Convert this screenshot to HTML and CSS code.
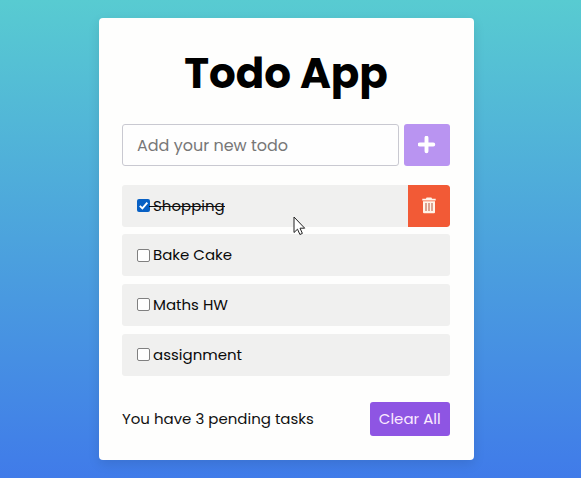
FILE: index.html
```html
<!DOCTYPE html>
<html lang="en">
<head>
<meta charset="utf-8">
<title>Todo App</title>
<link rel="stylesheet" href="styles.css">
</head>
<body>
<main class="card">
  <h1 class="title">Todo App</h1>
  <form class="entry">
    <input class="field" type="text" placeholder="Add your new todo" aria-label="New todo">
    <button class="add" type="button" aria-label="Add">
      <svg width="18" height="18" viewBox="0 0 18 18"><path d="M8.500 1.700v13.600M1.700 8.500h13.600" fill="none" stroke="#fff" stroke-width="3.900" stroke-linecap="round"/></svg>
    </button>
  </form>
  <ul class="list">
    <li class="item done"><span class="box"><svg width="13" height="13" viewBox="0 0 13 13"><path d="M2.8 6.8l2.6 2.6 4.9-5.8" fill="none" stroke="#fff" stroke-width="1.9"/></svg></span><span class="label">Shopping</span>
      <button class="remove" type="button" aria-label="Delete">
        <svg width="14" height="17" viewBox="0 0 14 17"><path d="M.3 1.7h3.6L4.6.6h4.8l.7 1.1h3.6v1.7H.3z" fill="#fff3e8"/><path d="M1 4.300h12v11q0 1-1 1H2q-1 0-1-1z" fill="#fff3e8"/><path d="M4 6v8M7 6v8M10 6v8" stroke="#b8553c" stroke-width="1"/></svg>
      </button>
    </li>
    <li class="item"><span class="box"></span><span class="label">Bake Cake</span></li>
    <li class="item"><span class="box"></span><span class="label">Maths HW</span></li>
    <li class="item"><span class="box"></span><span class="label">assignment</span></li>
  </ul>
  <footer class="footer">
    <span class="pending">You have 3 pending tasks</span>
    <button class="clear" type="button">Clear All</button>
  </footer>
</main>
<svg class="cursor" width="14" height="21" viewBox="0 0 14 21"><path d="M1 1v15.500l3.500-3.300 2.400 5.300 2.500-1.100-2.400-5.200h4.700z" fill="#fff" stroke="#222" stroke-width="1"/></svg>
</body>
</html>
```
FILE: styles.css
```css
* { box-sizing: border-box; margin: 0; padding: 0; }
body {
  height: 478px;
  overflow: hidden;
  padding: 18px 0 0 99px;
  background: linear-gradient(to bottom, #58cbd1 0%, #407be9 100%);
  font: 15px/24px Poppins, Inter, sans-serif;
  color: #111;
}
button, input { font: inherit; border: 0; }
.card {
  width: 375px;
  height: 442px;
  padding: 28px 24px 0 23px;
  border-radius: 4px;
  background: #fefefd;
  box-shadow: 0 4px 12px rgba(0, 0, 0, .1);
}
.title {
  height: 56px;
  font-size: 42px;
  line-height: 56px;
  font-weight: 700;
  text-align: center;
  color: #000;
  white-space: nowrap;
}
.entry { display: flex; gap: 5px; height: 42px; margin-top: 21.600px; }
.field {
  width: 277px;
  padding: 2px 14px 0;
  border: 1px solid #c9c9d1;
  border-radius: 3px;
  background: #fefefe;
  font-size: 16px;
}
.field::placeholder { color: #777; opacity: 1; }
.add {
  display: flex;
  align-items: center;
  justify-content: center;
  width: 46px;
  border-radius: 3px;
  background: #b994f1;
}
.list { display: grid; gap: 7.700px; margin-top: 19px; list-style: none; }
.item {
  display: flex;
  align-items: center;
  height: 42px;
  padding-left: 14.500px;
  border-radius: 3px;
  background: #f0f0ef;
  overflow: hidden;
}
.box {
  width: 13px;
  height: 13px;
  margin-right: 3.500px;
  border: 1px solid #808080;
  border-radius: 2px;
  background: #fff;
}
.done .box { border: 0; background: #0860c4; }
.box svg { display: block; }
.label { color: #0a0a0a; }
.done .label { position: relative; }
.done .label::before {
  content: "";
  position: absolute;
  left: -4px;
  right: 0;
  top: 12px;
  height: 1px;
  background: #111;
}
.remove {
  display: flex;
  align-items: center;
  justify-content: center;
  width: 42px;
  height: 42px;
  margin-left: auto;
  border-radius: 0 3px 3px 0;
  background: #f25a36;
}
.footer {
  display: flex;
  align-items: center;
  justify-content: space-between;
  height: 34px;
  margin-top: 26px;
}
.clear {
  width: 80.500px;
  height: 34px;
  border-radius: 3px;
  background: #8e55e3;
  color: #fbeaff;
  white-space: nowrap;
}
.cursor { position: absolute; left: 292.500px; top: 215.500px; }
```
